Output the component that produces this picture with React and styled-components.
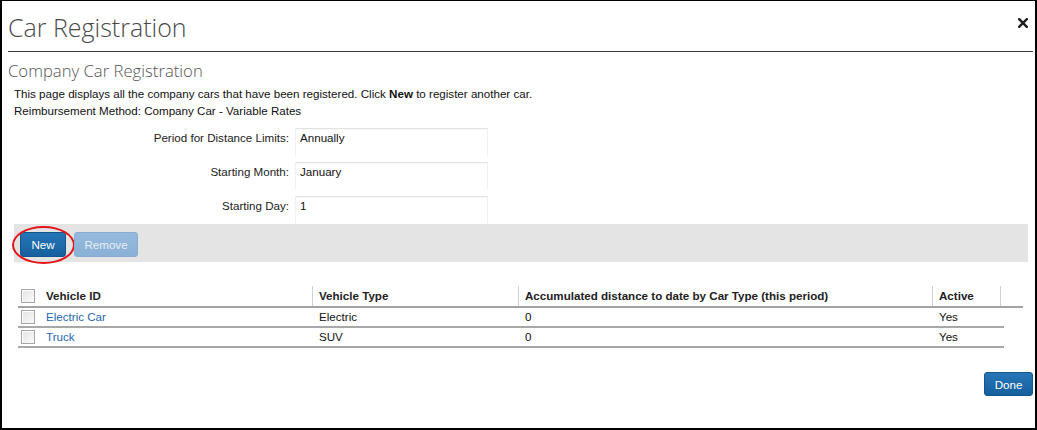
import React from "react";
import styled, { createGlobalStyle } from "styled-components";

const Global = createGlobalStyle`
  html, body { margin: 0; padding: 0; background: #fff; }
  body { font-family: "Liberation Sans", Arial, sans-serif; font-size: 11.6px; color: #222; }
  * { box-sizing: border-box; }
`;

const Dialog = styled.div`
  width: 1037px;
  height: 430px;
  border: 2px solid #000;
  border-top-width: 1px;
  background: #fff;
  display: flex;
  flex-direction: column;
  overflow: hidden;
`;

const Header = styled.div`
  height: 51px;
  flex: none;
  margin: 0 2px 0 6px;
  padding: 9px 5px 0 0;
  border-bottom: 1px solid #3a3a3a;
  display: flex;
  justify-content: space-between;
  align-items: flex-start;
`;

const Title = styled.h1`
  margin: 0;
  font-family: "Open Sans", sans-serif;
  font-weight: 300;
  font-size: 25px;
  line-height: 34px;
  color: #4a4a4a;
`;

const Close = styled.button`
  margin-top: 8px;
  padding: 0;
  border: 0;
  background: none;
  width: 10px;
  height: 10px;
  display: flex;
  cursor: pointer;
`;

const Body = styled.div`
  flex: 1;
  display: flex;
  flex-direction: column;
  padding: 0 7px 0 12px;
`;

const Subtitle = styled.h2`
  margin: 7px 0 0 -6px;
  font-family: "Open Sans", sans-serif;
  font-weight: 300;
  font-size: 16.7px;
  line-height: 23px;
  color: #555;
`;

const Intro = styled.p`
  margin: 3px 0 0;
  line-height: 17px;
  color: #111;
`;

const Form = styled.div`
  margin-top: 9px;
  display: grid;
  grid-template-columns: 275px 193px;
  column-gap: 6px;
  row-gap: 6px;
  grid-auto-rows: 28px;
`;

const Label = styled.label`
  text-align: right;
  padding-top: 1px;
  line-height: 17px;
  color: #222;
`;

const Field = styled.div`
  border: 1px solid #f1f1f1;
  border-top-color: #e2e2e2;
  border-bottom-color: transparent;
  box-shadow: inset 0 1px 1px rgba(0, 0, 0, 0.03);
  padding: 0 4px;
  line-height: 17px;
  color: #111;
`;

const Toolbar = styled.div`
  height: 38px;
  background: #e3e4e3;
  display: flex;
  gap: 8px;
  align-items: flex-start;
  padding: 8px 6px 0;
`;

const Button = styled.button`
  position: relative;
  height: ${(p) => p.$h || 25}px;
  width: ${(p) => p.$w}px;
  padding: 0;
  border-radius: 3px;
  font-family: "Liberation Sans", Arial, sans-serif;
  font-size: 11.6px;
  cursor: pointer;
  border: 1px solid ${(p) => (p.$disabled ? "#86acd2" : "#13558e")};
  background: ${(p) =>
    p.$disabled
      ? "linear-gradient(#95badc, #8ab1d6)"
      : "linear-gradient(#2676b8, #175f9d)"};
  color: ${(p) => (p.$disabled ? "#e6eef7" : "#fff")};
`;

const Highlight = styled.span`
  position: absolute;
  left: -9px;
  top: -7px;
  width: 63px;
  height: 38px;
  border: 2px solid #e3151a;
  border-radius: 50%;
  pointer-events: none;
`;

const Table = styled.div`
  margin: 24px 0 0 4px;
  display: flex;
  flex-direction: column;
`;

const HeadRow = styled.div`
  width: 1005px;
  display: grid;
  grid-template-columns: 295px 206px 414px 68px 22px;
  border-bottom: 2px solid #a3a3a3;
`;

const Row = styled.div`
  width: 986px;
  display: grid;
  grid-template-columns: 295px 206px 414px 71px;
  border-bottom: 2px solid #a8a8a8;
`;

const HeadCell = styled.div`
  height: 20px;
  line-height: 20px;
  padding-left: ${(p) => (p.$first ? 3 : 6)}px;
  font-weight: bold;
  color: #222;
  border-right: ${(p) => (p.$last ? "none" : "1px solid #d2d2d2")};
  display: flex;
  align-items: center;
  gap: 11px;
`;

const Cell = styled.div`
  height: 18px;
  line-height: 18px;
  padding-left: ${(p) => (p.$first ? 3 : 6)}px;
  color: #111;
  display: flex;
  align-items: center;
  gap: 11px;
`;

const Check = styled.span`
  width: 14px;
  height: 14px;
  flex: none;
  border: 1px solid #a5a5a5;
  background: linear-gradient(135deg, #e2e2e2, #fbfbfb);
  box-shadow: inset 1px 1px 0 #fff;
`;

const Link = styled.a`
  color: #2468b0;
  text-decoration: none;
  line-height: 18px;
`;

const Footer = styled.div`
  margin-top: 24px;
  display: flex;
  justify-content: flex-end;
  padding-right: 2px;
  margin-right: -7px;
`;

const rows = [
  { id: "Electric Car", type: "Electric", dist: "0", active: "Yes" },
  { id: "Truck", type: "SUV", dist: "0", active: "Yes" },
];

export default function App() {
  return (
    <>
      <Global />
      <Dialog>
        <Header>
          <Title>Car Registration</Title>
          <Close aria-label="Close">
            <svg width="10" height="10" viewBox="0 0 10 10">
              <path d="M1.2 1.2 L8.8 8.8 M8.8 1.2 L1.2 8.8" stroke="#1e1e1e" strokeWidth="2.4" strokeLinecap="square" />
            </svg>
          </Close>
        </Header>
        <Body>
          <Subtitle>Company Car Registration</Subtitle>
          <Intro>
            This page displays all the company cars that have been registered. Click <b>New</b> to register another car.
            <br />
            Reimbursement Method: Company Car - Variable Rates
          </Intro>
          <Form>
            <Label>Period for Distance Limits:</Label>
            <Field>Annually</Field>
            <Label>Starting Month:</Label>
            <Field>January</Field>
            <Label>Starting Day:</Label>
            <Field>1</Field>
          </Form>
          <Toolbar>
            <Button $w={46}>
              New
              <Highlight />
            </Button>
            <Button $w={64} $disabled>
              Remove
            </Button>
          </Toolbar>
          <Table>
            <HeadRow>
              <HeadCell $first>
                <Check />
                Vehicle ID
              </HeadCell>
              <HeadCell>Vehicle Type</HeadCell>
              <HeadCell>Accumulated distance to date by Car Type (this period)</HeadCell>
              <HeadCell>Active</HeadCell>
              <HeadCell $last />
            </HeadRow>
            {rows.map((r) => (
              <Row key={r.id}>
                <Cell $first>
                  <Check />
                  <Link href="#">{r.id}</Link>
                </Cell>
                <Cell>{r.type}</Cell>
                <Cell>{r.dist}</Cell>
                <Cell>{r.active}</Cell>
              </Row>
            ))}
          </Table>
          <Footer>
            <Button $w={49} $h={24}>Done</Button>
          </Footer>
        </Body>
      </Dialog>
    </>
  );
}
